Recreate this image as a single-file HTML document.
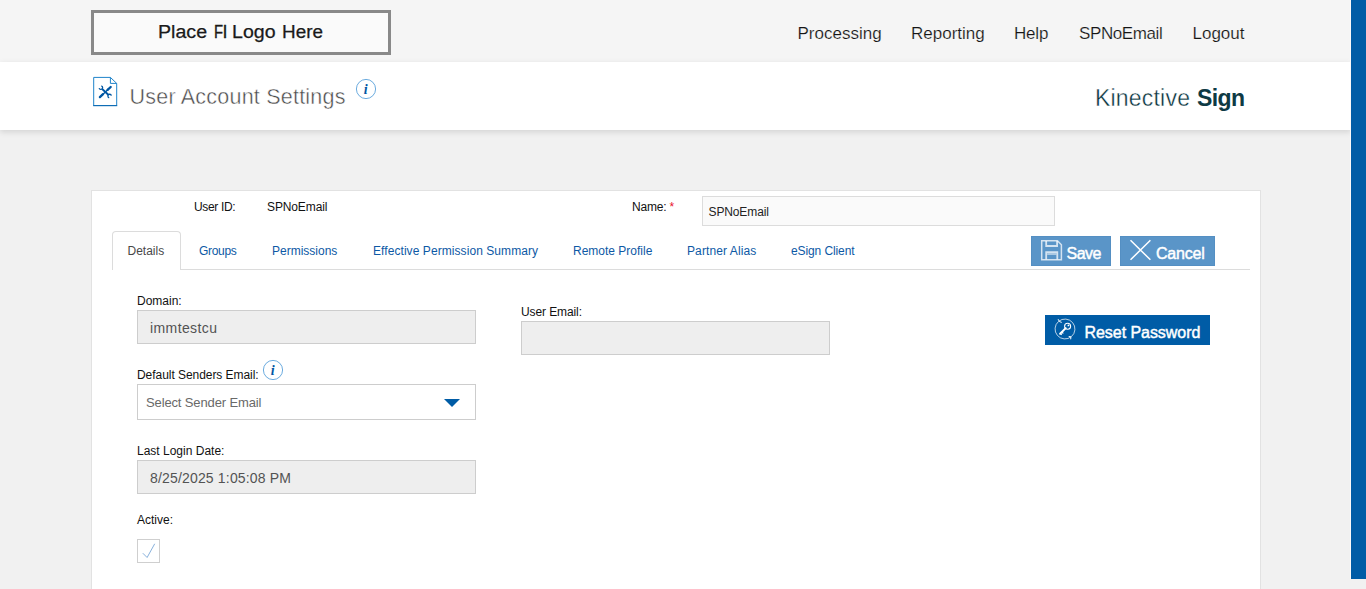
<!DOCTYPE html>
<html>
<head>
<meta charset="utf-8">
<title>User Account Settings</title>
<style>
*{box-sizing:border-box;margin:0;padding:0}
html,body{width:1366px;height:589px;overflow:hidden}
body{font-family:"Liberation Sans",sans-serif;background:#f1f1f1;position:relative;color:#222}
.abs{position:absolute}
#topbar{left:0;top:0;width:1351px;height:62px;background:#f5f5f5}
#logo{left:91px;top:10px;width:300px;height:45px;border:3px solid #898989;background:#fafafa}
.lw{top:20px;font-size:18px;line-height:24px;color:#1a1a1a;-webkit-text-stroke:.25px #1a1a1a;white-space:nowrap;transform-origin:0 0}
.nav{top:23px;font-size:17px;line-height:22px;color:#151515;-webkit-text-stroke:.18px #f5f5f5;white-space:nowrap}
#band{left:0;top:62px;width:1351px;height:68px;background:#fff;box-shadow:0 2px 6px rgba(0,0,0,.13)}
#title{left:129.5px;top:82.5px;font-size:21.5px;line-height:28px;color:#484848;-webkit-text-stroke:.45px #fff;white-space:nowrap;letter-spacing:.22px}
.brand{top:84px;font-size:23px;line-height:28px;color:#0e3a44;white-space:nowrap}
#rbar{left:1350px;top:0;width:16px;height:579px;background:#005ca6;border-left:1px solid #f9f9f9}
#panel{left:91px;top:190px;width:1170px;height:420px;background:#fff;border:1px solid #e2e2e2}
.lbl{font-size:12px;line-height:14px;color:#111;white-space:nowrap}
.tab{top:244px;font-size:12px;line-height:14px;color:#0d59a5;white-space:nowrap}
.inp{border:1px solid #cdcdcd;background:#eeeeee;font-size:14px;color:#535353;white-space:nowrap}
.btn{color:#fff;font-size:16px;white-space:nowrap}
.btxt{color:#fff;font-size:16px;line-height:20px;font-weight:normal;-webkit-text-stroke:.45px #fff;white-space:nowrap}
</style>
</head>
<body>
<div id="topbar" class="abs"></div>
<div id="logo" class="abs"></div>
<div class="abs lw" style="left:158.1px;transform:scaleX(1.09)">Place</div>
<div class="abs lw" style="left:213.7px;transform:scaleX(.82);-webkit-text-stroke:.4px #1a1a1a">F</div>
<div class="abs lw" style="left:222.6px;-webkit-text-stroke:.3px #1a1a1a">I</div>
<div class="abs lw" style="left:232px;transform:scaleX(1.087)">Logo</div>
<div class="abs lw" style="left:281.9px;transform:scaleX(1.05)">Here</div>
<div class="abs nav" style="left:797.5px">Processing</div>
<div class="abs nav" style="left:911px">Reporting</div>
<div class="abs nav" style="left:1014px;letter-spacing:-.2px">Help</div>
<div class="abs nav" style="left:1079px;letter-spacing:-.4px">SPNoEmail</div>
<div class="abs nav" style="left:1192.5px">Logout</div>

<div id="band" class="abs"></div>
<svg class="abs" style="left:92px;top:75px" width="27" height="33" viewBox="92 75 27 33">
<path d="M93.7 77.4 H110.4 L116.7 83.4 V105.5 H93.7 Z" fill="#fff" stroke="#1f83ca" stroke-width="1"/>
<path d="M110.4 77.4 V83.4 H116.7" fill="none" stroke="#1f83ca" stroke-width="1"/>
<path d="M93.2 105.6 H117.2" stroke="#0f6db5" stroke-width="1.2"/>
<path d="M101.9 88.7 L108.6 95" stroke="#0057a3" stroke-width="1.9"/>
<path d="M101.3 85.9 A1.8 1.8 0 1 1 99.1 88.1" fill="none" stroke="#0057a3" stroke-width="1.3"/>
<path d="M109.2 97.8 A1.8 1.8 0 1 1 111.4 95.6" fill="none" stroke="#0057a3" stroke-width="1.3"/>
<path d="M110.7 87 L107.6 89.9 M103 94.2 L99.9 97.1" stroke="#0057a3" stroke-width="2.3" stroke-linecap="round"/>
<path d="M108.5 89 L102 95.2" stroke="#0057a3" stroke-width="1.5"/>
</svg>
<div id="title" class="abs">User Account Settings</div>
<svg class="abs" style="left:354px;top:77px" width="24" height="24" viewBox="-12 -12 24 24">
<circle cx="0" cy="0" r="9.6" fill="#fff" stroke="#4595d6" stroke-width=".8"/>
<text x="-0.3" y="5.3" text-anchor="middle" font-family="Liberation Serif" font-style="italic" font-weight="bold" font-size="14" fill="#0057a3">i</text>
</svg>
<div class="abs brand" style="left:1095px;letter-spacing:.2px;color:#06323c;-webkit-text-stroke:.38px #fff">Kinective</div>
<div class="abs brand" style="left:1197px;font-weight:bold;letter-spacing:-.6px">Sign</div>
<div id="rbar" class="abs"></div>

<div id="panel" class="abs"></div>

<div class="abs lbl" style="left:194px;top:200px;letter-spacing:-.35px">User ID:</div>
<div class="abs lbl" style="left:267px;top:200px;letter-spacing:-.12px">SPNoEmail</div>
<div class="abs lbl" style="left:632px;top:200px;letter-spacing:-.2px">Name: <span style="color:#e8112d">*</span></div>
<div class="abs inp" style="left:702px;top:196px;width:353px;height:30px;background:#fafafa;border-color:#dcdcdc"></div>
<div class="abs lbl" style="left:708.5px;top:205px;color:#222;letter-spacing:-.12px">SPNoEmail</div>

<div class="abs" style="left:112px;top:269px;width:1138px;height:1px;background:#dcdcdc"></div>
<div class="abs" style="left:112px;top:231px;width:69px;height:39px;background:#fff;border:1px solid #dcdcdc;border-bottom:none;border-radius:4px 4px 0 0"></div>
<div class="abs tab" style="left:127.5px;color:#484848">Details</div>
<div class="abs tab" style="left:199px;letter-spacing:-.3px">Groups</div>
<div class="abs tab" style="left:272px">Permissions</div>
<div class="abs tab" style="left:373px;letter-spacing:.07px">Effective Permission Summary</div>
<div class="abs tab" style="left:573px">Remote Profile</div>
<div class="abs tab" style="left:687px;letter-spacing:.1px">Partner Alias</div>
<div class="abs tab" style="left:791px;letter-spacing:-.1px">eSign Client</div>

<div class="abs btn" style="left:1031px;top:236px;width:80px;height:30px;background:#5a95c8;border:1px solid #548fc3"></div>
<svg class="abs" style="left:1040px;top:239px" width="24" height="24" viewBox="1040 239 24 24">
<g fill="none" stroke="rgba(255,255,255,.74)">
<path d="M1041.7 240.8 H1057.4 L1061.4 244.8 V259.7 H1041.7 Z" stroke-width="1.5"/>
<path d="M1046.2 241 V246 H1057.1 V241" stroke-width="1.8"/>
<path d="M1046.2 259.6 V252.1 H1057.3 V259.6" stroke-width="1.8"/>
</g>
<path d="M1047.2 254 H1056.4" stroke="rgba(255,255,255,.9)" stroke-width="1.1"/>
</svg>
<div class="abs btxt" style="left:1066.5px;top:244px;letter-spacing:-.5px">Save</div>
<div class="abs btn" style="left:1120px;top:236px;width:95px;height:30px;background:#5a95c8;border:1px solid #548fc3"></div>
<svg class="abs" style="left:1128px;top:238px" width="26" height="26" viewBox="1128 238 26 26">
<path d="M1130.5 240.3 L1150.4 259.8 M1150.4 240.3 L1130.5 259.8" fill="none" stroke="#fff" stroke-width="1.5"/></svg>
<div class="abs btxt" style="left:1156px;top:244px;letter-spacing:-.2px">Cancel</div>
<div class="abs btn" style="left:1045px;top:315px;width:165px;height:30px;background:#005ca6"></div>
<svg class="abs" style="left:1053px;top:317px" width="24" height="24" viewBox="-12 -12 24 24">
<g fill="none" stroke="rgba(255,255,255,.8)" stroke-width=".9">
<path d="M-6.4 -7.6 A9.9 9.9 0 0 1 6.4 7.6"/>
<path d="M6.4 7.6 A9.9 9.9 0 0 1 -6.4 -7.6" />
</g>
<g fill="none" stroke="#fff" stroke-width="1.1">
<circle cx="2.6" cy="-2.8" r="3"/>
</g>
<circle cx="3.4" cy="-3.6" r="0.9" fill="#fff"/>
<path d="M0.7 -0.9 L-4.9 4.7" stroke="#fff" stroke-width="2" stroke-linecap="round"/>
<path d="M-3 3.2 L-1.7 4.5 M-4.5 4.7 L-3.3 5.9" stroke="#fff" stroke-width="1.1"/>
<path d="M-6.9 -9.8 L-5.5 -7.4 L-3.3 -6.6 M3.7 7.5 L5.9 7.8 L5.7 10.3" fill="none" stroke="#fff" stroke-width="1"/>
</svg>
<div class="abs btxt" style="left:1084.5px;top:323px;letter-spacing:-.05px">Reset Password</div>

<div class="abs lbl" style="left:137px;top:294px">Domain:</div>
<div class="abs inp" style="left:137px;top:310px;width:339px;height:34px"></div>
<div class="abs inp" style="left:150px;top:320px;border:none;background:none;line-height:16px;letter-spacing:.4px">immtestcu</div>
<div class="abs lbl" style="left:521px;top:305px;letter-spacing:-.1px">User Email:</div>
<div class="abs inp" style="left:521px;top:321px;width:309px;height:34px"></div>
<div class="abs lbl" style="left:137px;top:368px;letter-spacing:-.05px">Default Senders Email:</div>
<svg class="abs" style="left:261px;top:358px" width="24" height="24" viewBox="-12 -12 24 24">
<circle cx="0" cy="0" r="9.6" fill="#fff" stroke="#4595d6" stroke-width=".8"/>
<text x="-0.3" y="5.3" text-anchor="middle" font-family="Liberation Serif" font-style="italic" font-weight="bold" font-size="14" fill="#0057a3">i</text>
</svg>
<div class="abs inp" style="left:137px;top:384px;width:339px;height:36px;background:#fff"></div>
<div class="abs" style="left:146px;top:394.5px;font-size:13px;line-height:16px;color:#696969;white-space:nowrap;letter-spacing:-.13px">Select Sender Email</div>
<div class="abs" style="left:444px;top:399px;width:0;height:0;border-left:8px solid transparent;border-right:8px solid transparent;border-top:8.4px solid #005ca6"></div>
<div class="abs lbl" style="left:137px;top:444px">Last Login Date:</div>
<div class="abs inp" style="left:137px;top:460px;width:339px;height:34px"></div>
<div class="abs inp" style="left:150px;top:470px;border:none;background:none;line-height:16px;letter-spacing:.17px">8/25/2025 1:05:08 PM</div>
<div class="abs lbl" style="left:137px;top:513px">Active:</div>
<div class="abs" style="left:137px;top:539px;width:23px;height:24px;background:#fff;border:1px solid #cfcfcf"></div>
<svg class="abs" style="left:137px;top:539px" width="23" height="24" viewBox="0 0 23 24"><path d="M5.8 14.2 L10.1 18.5 L17.7 4.8" fill="none" stroke="#88b1dc" stroke-width="1"/></svg>
</body>
</html>
